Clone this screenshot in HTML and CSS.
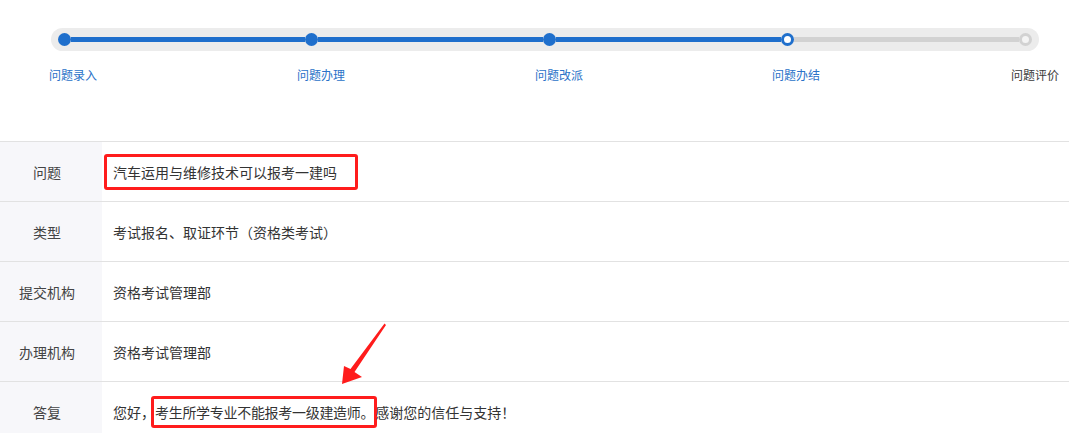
FILE: index.html
```html
<!DOCTYPE html>
<html lang="zh-CN">
<head>
    <meta charset="UTF-8">
    <meta name="viewport" content="width=device-width, initial-scale=1.0">
    <title>问题详情</title>
    <link rel="stylesheet" href="styles.css">
</head>
<body>
    <div class="page">
        <div class="steps">
            <div class="track">
                <span class="dot done"></span>
                <span class="line done first"></span>
                <span class="dot done"></span>
                <span class="line done"></span>
                <span class="dot done"></span>
                <span class="line done"></span>
                <span class="dot current"></span>
                <span class="line"></span>
                <span class="dot todo"></span>
            </div>
            <div class="step-labels">
                <span class="step-label active">问题录入</span>
                <span class="step-label active">问题办理</span>
                <span class="step-label active">问题改派</span>
                <span class="step-label active">问题办结</span>
                <span class="step-label">问题评价</span>
            </div>
        </div>

        <table class="detail">
            <tr>
                <th>问题</th>
                <td><span class="mark mark-title">汽车运用与维修技术可以报考一建吗</span></td>
            </tr>
            <tr>
                <th>类型</th>
                <td>考试报名、取证环节（资格类考试）</td>
            </tr>
            <tr>
                <th>提交机构</th>
                <td>资格考试管理部</td>
            </tr>
            <tr>
                <th>办理机构</th>
                <td>资格考试管理部</td>
            </tr>
            <tr>
                <th>答复</th>
                <td>您好，<span class="mark mark-answer">考生所学专业不能报考一级建造师。</span>感谢您的信任与支持！</td>
            </tr>
        </table>

        <svg class="arrow" width="70" height="70" viewBox="0 0 70 70">
            <polygon points="12,64 14,46 20.5,49 54.5,3.5 56,5 24.5,52 32,57" fill="#ff1c1c"/>
        </svg>
    </div>
</body>
</html>
```

FILE: styles.css
```css
body {
    margin: 0;
    padding: 0;
    background: #ffffff;
    font-family: "Noto Sans CJK SC", "Noto Sans", sans-serif;
    color: #333333;
}

.page {
    position: relative;
    overflow: hidden;
    height: 433px;
}

.steps {
    padding-top: 28px;
    height: 141px;
    box-sizing: border-box;
}

.track {
    margin-left: 51px;
    width: 988px;
    height: 23px;
    border-radius: 12px;
    background: #ececec;
    display: flex;
    align-items: center;
    padding-left: 7px;
    box-sizing: border-box;
}

.dot {
    width: 13px;
    height: 13px;
    border-radius: 50%;
    box-sizing: border-box;
    flex: none;
}

.dot.done {
    background: #1f6fcc;
}

.dot.current {
    background: #ffffff;
    border: 3px solid #1f6fcc;
}

.dot.todo {
    background: #f4f4f4;
    border: 3px solid #d2d2d2;
}

.line {
    flex: none;
    width: 225px;
    height: 5px;
    background: #d2d2d2;
}

.line.first {
    width: 234px;
}

.line.done {
    background: #1f6fcc;
}

.step-labels {
    display: grid;
    grid-template-columns: 248px 238px 237px 239px auto;
    margin-left: 49px;
    margin-top: 16px;
    font-size: 12px;
    line-height: 16px;
}

.step-label {
    color: #3a3a3a;
}

.step-label.active {
    color: #2a72c8;
}

.detail {
    width: 100%;
    border-collapse: collapse;
    font-size: 14px;
}

.detail tr {
    height: 60px;
    border-top: 1px solid #e2e2e2;
}

.detail th {
    width: 102px;
    padding: 0 8px 0 0;
    box-sizing: border-box;
    background: #f7f7fa;
    font-weight: normal;
    color: #444444;
    text-align: center;
}

.detail td {
    padding: 0 0 0 11px;
    color: #333333;
}

.mark {
    border: 3px solid #ff1c1c;
    border-radius: 3px;
}

.mark-title {
    display: inline-block;
    padding: 5px 18px 5px 6px;
    margin-left: -9px;
}

.mark-answer {
    padding: 3px 0 3px 1px;
    margin-left: -4px;
    margin-right: -2px;
    letter-spacing: -0.3px;
}

.arrow {
    position: absolute;
    left: 330px;
    top: 320px;
}
```
